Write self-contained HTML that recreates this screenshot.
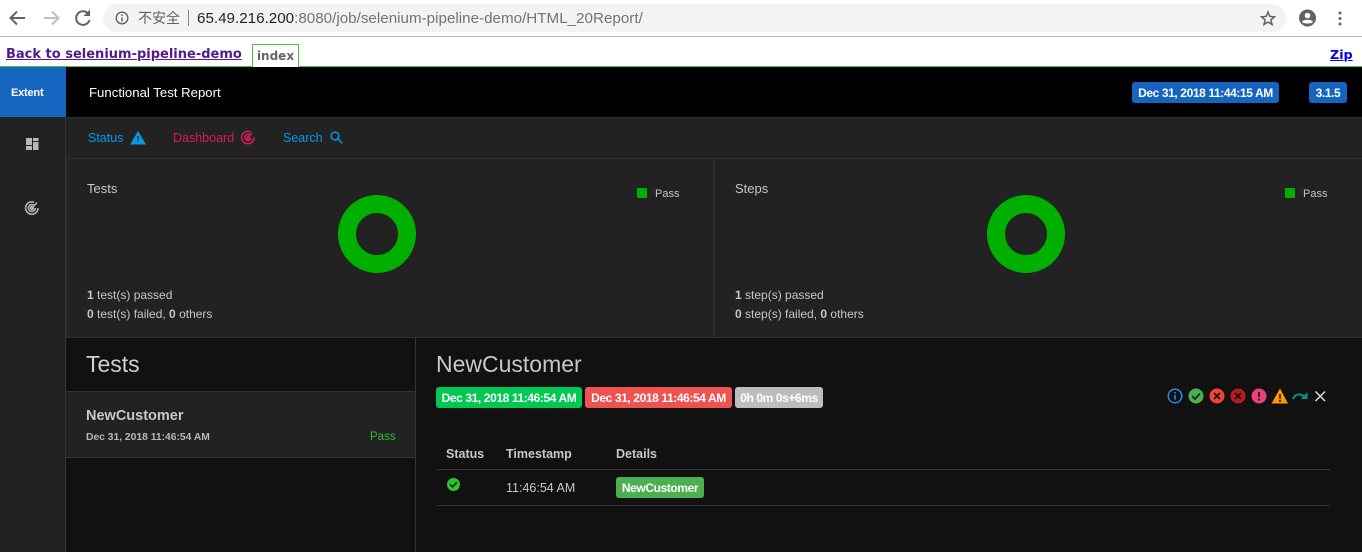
<!DOCTYPE html>
<html><head><meta charset="utf-8"><style>
html,body{margin:0;padding:0;background:#fff}
body{width:1362px;height:552px;overflow:hidden;position:relative;font-family:"Liberation Sans","Noto Sans CJK SC",sans-serif}
.a{position:absolute;white-space:nowrap}
.b{position:absolute}
.t{position:absolute;white-space:nowrap;line-height:16px}
.badge{position:absolute;height:21px;line-height:22px;border-radius:3px;color:#fff;font-weight:bold;font-size:12px;text-align:center;white-space:nowrap;letter-spacing:-.4px}
svg{position:absolute;overflow:visible}
</style></head><body>
<!-- browser bar -->
<div class="b" style="left:0;top:0;width:1362px;height:36px;background:#fff;border-bottom:1px solid #b8b8b8"></div>
<svg style="left:0;top:0" width="100" height="36" fill="none">
<path d="M25 18H11M17 11.5L10.5 18l6.500 6.500" stroke="#5f6368" stroke-width="2"/>
<path d="M44 18h14M52 11.500l6.500 6.500-6.500 6.500" stroke="#bdc1c6" stroke-width="2"/>
<path d="M88 13.500A6.800 6.800 0 1 0 89.500 20" stroke="#5f6368" stroke-width="2"/><path d="M90 9.500v6.500h-6.500z" fill="#5f6368"/>
</svg>
<div class="b" style="left:103px;top:4px;width:1183px;height:28px;border-radius:14px;background:#f1f3f4"></div>
<svg style="left:115px;top:11px" width="16" height="16" fill="none"><circle cx="7" cy="7" r="5.800" stroke="#5f6368" stroke-width="1.400"/><path d="M7 6.500v4M7 3.500V5" stroke="#5f6368" stroke-width="1.500"/></svg>
<div class="a" style="left:138px;top:9px;font-size:14px;line-height:18px;color:#5f6368;font-family:'Noto Sans CJK SC',sans-serif">不安全</div>
<div class="b" style="left:188px;top:10px;width:1px;height:16px;background:#888"></div>
<div class="a" style="left:197px;top:10px;font-size:15.200px;line-height:18px;color:#70757a"><span style="color:#202124">65.49.216.200</span>:8080/job/selenium-pipeline-demo/HTML_20Report/</div>
<svg style="left:1261px;top:11px" width="15" height="15"><path d="M7 1l1.800 4.400 4.700.4-3.600 3.100 1.100 4.600L7 11 3 13.500l1.100-4.600L.5 5.800l4.700-.4z" fill="none" stroke="#5f6368" stroke-width="1.500"/></svg>
<svg style="left:1299px;top:9px" width="18" height="18"><circle cx="8.500" cy="9" r="8.500" fill="#5f6368"/><circle cx="8.500" cy="6.500" r="2.800" fill="#fff"/><path d="M3 13c1-3 10-3 11 0-1.500 2-9.500 2-11 0z" fill="#fff"/></svg>
<svg style="left:1336px;top:11px" width="6" height="16"><circle cx="4" cy="2" r="1.500" fill="#5f6368"/><circle cx="4" cy="7.500" r="1.500" fill="#5f6368"/><circle cx="4" cy="13" r="1.500" fill="#5f6368"/></svg>

<!-- Jenkins header -->
<div class="a" style="left:6px;top:46px;font:bold 13px/17px 'DejaVu Sans',sans-serif;color:#551a8b;text-decoration:underline">Back to selenium-pipeline-demo</div>
<div class="b" style="left:252px;top:44px;width:45px;height:23px;border:1px solid #4ec04e;border-bottom:0;background:#fff;text-align:center;font:bold 12px/23px 'DejaVu Sans',sans-serif;color:#666">index</div>
<div class="a" style="left:1330px;top:46px;font:bold 12.700px/17px 'DejaVu Sans',sans-serif;color:#0000ee;text-decoration:underline">Zip</div>
<div class="b" style="left:0;top:66px;width:1362px;height:1px;background:#4ec04e"></div>
<div class="b" style="left:253px;top:66px;width:45px;height:1px;background:#fff"></div>

<!-- top navbar -->
<div class="b" style="left:0;top:67px;width:1362px;height:50px;background:#000"></div>
<div class="b" style="left:0;top:67px;width:66px;height:50px;background:#1565c0"></div>
<div class="a" style="left:11px;top:85px;color:#fff;font-weight:bold;font-size:11px;line-height:16px;letter-spacing:-.2px">Extent</div>
<div class="a" style="left:89px;top:85px;color:#fff;font-size:13.200px;line-height:16px">Functional Test Report</div>
<div class="badge" style="left:1132px;top:82px;width:147px;background:#1565c0">Dec 31, 2018 11:44:15 AM</div>
<div class="badge" style="left:1309px;top:82px;width:38px;background:#1565c0">3.1.5</div>

<!-- sidebar -->
<div class="b" style="left:0;top:117px;width:65px;height:435px;background:#222;border-right:1px solid #333"></div>
<svg style="left:25px;top:137px" width="14" height="14" fill="#b8b8b8"><path d="M1 1h6v7H1zM8 1h5.500v3H8zM8 5h5.500v8H8zM1 9h6v4H1z"/></svg>
<svg style="left:24px;top:200px" width="16" height="16" fill="none" stroke="#b4b4b4" stroke-width="1.600"><path d="M10 2.200A6.200 6.200 0 1 0 14 8"/><path d="M10 5.300A3.400 3.400 0 1 0 11.300 8"/><circle cx="8" cy="8" r="1.300" fill="#b4b4b4"/><path d="M8 8L13 2.500"/></svg>

<!-- subnav -->
<div class="b" style="left:66px;top:117px;width:1296px;height:41px;background:#222;border-top:1px solid #2c2c2c;box-sizing:border-box"></div>
<div class="t" style="left:88px;top:130px;font-size:12.500px;color:#039be5">Status</div>
<svg style="left:130px;top:131px" width="16" height="14"><path d="M8 0L16 13.500H0z" fill="#039be5"/><path d="M7.300 5h1.400v3.500H7.300zM7.300 9.500h1.400V11H7.300z" fill="#222"/></svg>
<div class="t" style="left:173px;top:130px;font-size:12.500px;color:#d81b60">Dashboard</div>
<svg style="left:241px;top:131px" width="14" height="14" fill="none" stroke="#d81b60" stroke-width="1.500"><path d="M9.500 1A6.200 6.200 0 1 0 13 6"/><path d="M9.300 4A3.200 3.200 0 1 0 10.300 7"/><circle cx="7" cy="7" r="1" fill="#d81b60"/><path d="M7 7l4-5"/></svg>
<div class="t" style="left:283px;top:130px;font-size:12.500px;color:#039be5">Search</div>
<svg style="left:330px;top:131px" width="13" height="13" fill="none" stroke="#039be5" stroke-width="1.500"><circle cx="5" cy="5" r="3.900"/><path d="M8 8l4.300 4.300"/></svg>

<!-- cards -->
<div class="b" style="left:66px;top:158px;width:1296px;height:180px;background:#222;border-top:1px solid #2e2e2e;border-bottom:1px solid #2e2e2e;box-sizing:border-box"></div>
<div class="b" style="left:66px;top:158px;width:1px;height:180px;background:#2e2e2e"></div>
<div class="b" style="left:713px;top:158px;width:2px;height:180px;background:#2e2e2e"></div>

<div class="t" style="left:87px;top:181px;font-size:13px;color:#c8c8c8">Tests</div>
<svg style="left:338px;top:195px" width="79" height="79"><circle cx="39" cy="39" r="30" fill="none" stroke="#00af00" stroke-width="18"/></svg>
<div class="b" style="left:637px;top:188px;width:10px;height:10px;background:#00af00;border-radius:1px"></div>
<div class="t" style="left:655px;top:186px;font-size:11px;color:#c8c8c8">Pass</div>
<div class="t" style="left:87px;top:287px;font-size:12px;color:#c8c8c8"><b>1</b> test(s) passed</div>
<div class="t" style="left:87px;top:306px;font-size:12px;color:#c8c8c8"><b>0</b> test(s) failed, <b>0</b> others</div>

<div class="t" style="left:735px;top:181px;font-size:13px;color:#c8c8c8">Steps</div>
<svg style="left:987px;top:195px" width="79" height="79"><circle cx="39" cy="39" r="30" fill="none" stroke="#00af00" stroke-width="18"/></svg>
<div class="b" style="left:1285px;top:188px;width:10px;height:10px;background:#00af00;border-radius:1px"></div>
<div class="t" style="left:1303px;top:186px;font-size:11px;color:#c8c8c8">Pass</div>
<div class="t" style="left:735px;top:287px;font-size:12px;color:#c8c8c8"><b>1</b> step(s) passed</div>
<div class="t" style="left:735px;top:306px;font-size:12px;color:#c8c8c8"><b>0</b> step(s) failed, <b>0</b> others</div>

<!-- lower: test list -->
<div class="b" style="left:66px;top:338px;width:1296px;height:214px;background:#111"></div>
<div class="b" style="left:415px;top:338px;width:1px;height:214px;background:#333"></div>
<div class="a" style="left:86px;top:350px;font-size:23px;line-height:28px;color:#d0d0d0">Tests</div>
<div class="b" style="left:66px;top:391px;width:349px;height:67px;background:#222;border-top:1px solid #333;border-bottom:1px solid #333;box-sizing:border-box"></div>
<div class="t" style="left:86px;top:408px;font-size:14.500px;font-weight:bold;color:#c8c8c8">NewCustomer</div>
<div class="t" style="left:86px;top:430px;font-size:10.300px;font-weight:bold;color:#b8b8b8">Dec 31, 2018 11:46:54 AM</div>
<div class="t" style="left:370px;top:429px;font-size:11.500px;color:#2fbf2f">Pass</div>

<!-- lower: detail -->
<div class="a" style="left:436px;top:350px;font-size:23px;line-height:28px;color:#c8c8c8">NewCustomer</div>
<div class="badge" style="left:436px;top:387px;width:146px;background:#00c853">Dec 31, 2018 11:46:54 AM</div>
<div class="badge" style="left:585px;top:387px;width:147px;background:#ef5350">Dec 31, 2018 11:46:54 AM</div>
<div class="badge" style="left:735px;top:387px;width:88px;background:#bdbdbd">0h 0m 0s+6ms</div>

<svg style="left:1167px;top:388px" width="164" height="16" fill="none">
<circle cx="8" cy="8" r="6.800" stroke="#2196f3" stroke-width="1.400"/><path d="M8 7v4.500M8 4v1.500" stroke="#2196f3" stroke-width="1.600"/>
<circle cx="29" cy="8" r="7.500" fill="#4caf50"/><path d="M25 8l3 3 5-5.500" stroke="#111" stroke-width="1.500"/>
<circle cx="50" cy="8" r="7.500" fill="#f44336"/><path d="M47 5l6 6M53 5l-6 6" stroke="#111" stroke-width="1.600"/>
<circle cx="71" cy="8" r="7.500" fill="#b71c1c"/><path d="M68 5l6 6M74 5l-6 6" stroke="#111" stroke-width="1.600"/>
<circle cx="92" cy="8" r="7.500" fill="#ec407a"/><path d="M92 4v5M92 10.500v2" stroke="#111" stroke-width="1.700"/>
<path d="M113 0.500l8 15h-16.500z" fill="#ff9800"/><path d="M113 6v5M113 12v2" stroke="#111" stroke-width="1.500"/>
<path d="M126 11c2-5 7-6 11-2.500" stroke="#009688" stroke-width="2"/><path d="M140.500 4v7h-6.500z" fill="#009688"/>
<path d="M148.500 3.500l9.500 9.500M158 3.500l-9.500 9.500" stroke="#ddd" stroke-width="1.500"/>
</svg>

<div class="t" style="left:446px;top:446px;font-size:12.500px;font-weight:bold;color:#c8c8c8">Status</div>
<div class="t" style="left:506px;top:446px;font-size:12.500px;font-weight:bold;color:#c8c8c8">Timestamp</div>
<div class="t" style="left:616px;top:446px;font-size:12.500px;font-weight:bold;color:#c8c8c8">Details</div>
<div class="b" style="left:436px;top:469px;width:894px;height:1px;background:#333"></div>
<svg style="left:447px;top:478px" width="13" height="13" fill="none"><circle cx="6.500" cy="6.500" r="6.500" fill="#2fbf2f"/><path d="M3.200 6.500l2.400 2.400 4.200-4.600" stroke="#111" stroke-width="1.400"/></svg>
<div class="t" style="left:506px;top:480px;font-size:12.500px;color:#c8c8c8">11:46:54 AM</div>
<div class="badge" style="left:616px;top:477px;width:88px;background:#4caf50">NewCustomer</div>
<div class="b" style="left:436px;top:505px;width:894px;height:1px;background:#333"></div>
</body></html>
